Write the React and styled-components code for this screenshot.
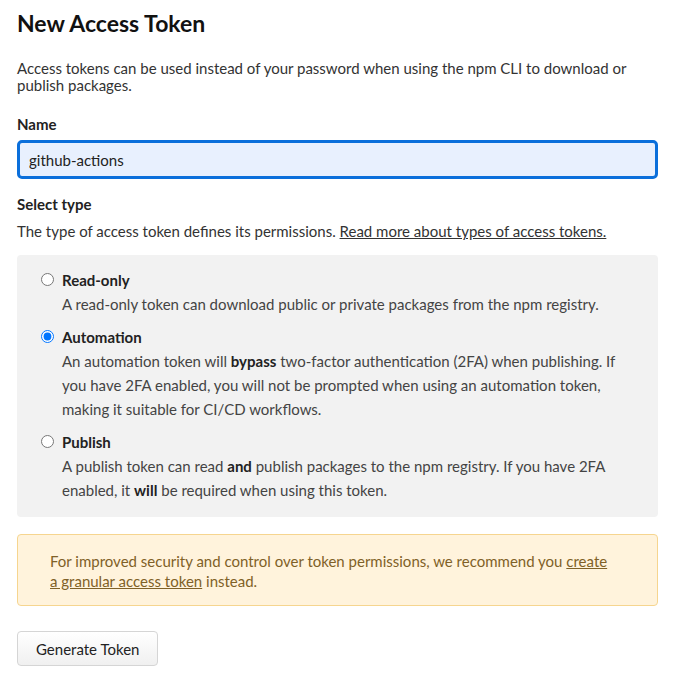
import React, { useState } from "react";
import styled, { createGlobalStyle } from "styled-components";

const GlobalStyle = createGlobalStyle`
  body {
    margin: 0;
    background: #ffffff;
    font-family: Lato, "Liberation Sans", sans-serif;
    color: #333333;
  }
`;

const Page = styled.div`
  width: 641px;
  padding: 8px 0 20px 17px;
  font-size: 15px;
`;

const Title = styled.h1`
  margin: 0 0 22px;
  font-size: 23px;
  line-height: 30px;
  font-weight: 700;
  color: #111111;
`;

const Intro = styled.p`
  margin: 0 0 19px;
  line-height: 17px;
  color: #333333;
`;

const Label = styled.div`
  font-weight: 700;
  line-height: 22px;
  margin-bottom: ${(p) => p.$gap || 5}px;
  color: #222222;
`;

const NameInput = styled.input`
  display: block;
  box-sizing: border-box;
  width: 641px;
  height: 39px;
  margin: 0 0 14px;
  padding: 0 9px;
  border: 3px solid #0b6fdb;
  border-radius: 5px;
  background: #e8f0fe;
  font: inherit;
  color: #222222;
  outline: none;
`;

const Help = styled.p`
  margin: 0 0 13px;
  line-height: 22px;
  color: #333333;

  a {
    color: #333333;
    text-decoration: underline;
  }
`;

const TypeBox = styled.div`
  background: #f2f2f2;
  border-radius: 4px;
  padding: 13px 24px 15px;
  display: flex;
  flex-direction: column;
  gap: 9px;
`;

const Option = styled.label`
  display: grid;
  grid-template-columns: 21px 1fr;
  cursor: pointer;
`;

const Radio = styled.input`
  margin: 5px 0 0;
  width: 13px;
  height: 13px;
  accent-color: #0075ff;
`;

const OptionTitle = styled.span`
  font-weight: 700;
  line-height: 24px;
  color: #222222;
`;

const OptionText = styled.span`
  grid-column: 2;
  line-height: 24px;
  color: #444444;

  b {
    color: #222222;
  }
`;

const Notice = styled.div`
  margin-top: 17px;
  background: #fff3dc;
  border: 1px solid #f6d58f;
  border-radius: 4px;
  padding: 16px 42px 14px 32px;
  line-height: 20px;
  color: #7f6127;

  a {
    color: #7f6127;
    text-decoration: underline;
  }
`;

const Button = styled.button`
  margin-top: 25px;
  height: 35px;
  padding: 0 18px;
  border: 1px solid #d5d5d5;
  border-radius: 4px;
  background: linear-gradient(#ffffff, #f0f0f0);
  font: inherit;
  color: #222222;
  cursor: pointer;
`;

const OPTIONS = [
  {
    id: "read-only",
    title: "Read-only",
    text: <>A read-only token can download public or private packages from the npm registry.</>,
  },
  {
    id: "automation",
    title: "Automation",
    text: (
      <>
        An automation token will <b>bypass</b> two-factor authentication (2FA) when publishing. If
        you have 2FA enabled, you will not be prompted when using an automation token, making it
        suitable for CI/CD workflows.
      </>
    ),
  },
  {
    id: "publish",
    title: "Publish",
    text: (
      <>
        A publish token can read <b>and</b> publish packages to the npm registry. If you have 2FA
        enabled, it <b>will</b> be required when using this token.
      </>
    ),
  },
];

export default function App() {
  const [name, setName] = useState("github-actions");
  const [type, setType] = useState("automation");

  return (
    <Page>
      <GlobalStyle />
      <Title>New Access Token</Title>
      <Intro>
        Access tokens can be used instead of your password when using the npm CLI to download or
        publish packages.
      </Intro>

      <Label>Name</Label>
      <NameInput value={name} onChange={(e) => setName(e.target.value)} />

      <Label $gap={5}>Select type</Label>
      <Help>
        The type of access token defines its permissions.{" "}
        <a href="#">Read more about types of access tokens.</a>
      </Help>

      <TypeBox>
        {OPTIONS.map((opt) => (
          <Option key={opt.id}>
            <Radio
              type="radio"
              name="type"
              checked={type === opt.id}
              onChange={() => setType(opt.id)}
            />
            <OptionTitle>{opt.title}</OptionTitle>
            <OptionText>{opt.text}</OptionText>
          </Option>
        ))}
      </TypeBox>

      <Notice>
        For improved security and control over token permissions, we recommend you{" "}
        <a href="#">create a granular access token</a> instead.
      </Notice>

      <Button>Generate Token</Button>
    </Page>
  );
}
